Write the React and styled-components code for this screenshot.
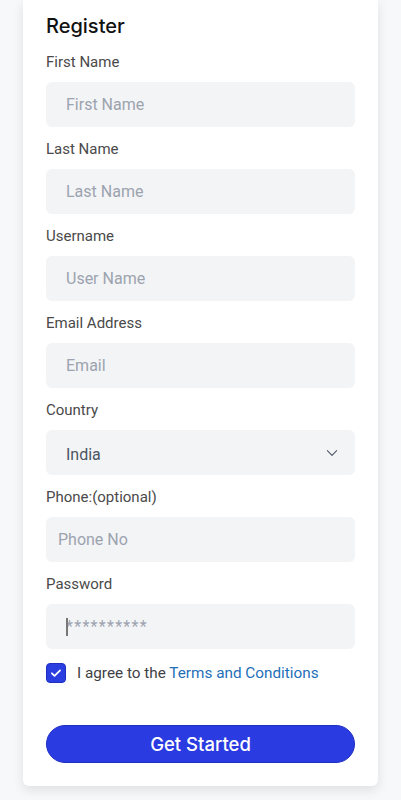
import React from "react";
import styled, { createGlobalStyle } from "styled-components";

const fields = [
  { label: "First Name", placeholder: "First Name" },
  { label: "Last Name", placeholder: "Last Name" },
  { label: "Username", placeholder: "User Name" },
  { label: "Email Address", placeholder: "Email" },
];

export default function App() {
  return (
    <>
      <GlobalStyle />
      <Page>
        <Card>
          <Title>Register</Title>
          {fields.map((f) => (
            <Field key={f.label}>
              <Label>{f.label}</Label>
              <Input placeholder={f.placeholder} />
            </Field>
          ))}
          <Field>
            <Label>Country</Label>
            <SelectBox>
              <span>India</span>
              <svg width="14" height="14" viewBox="0 0 24 24" fill="none" stroke="#4b5563" strokeWidth="1.8" strokeLinecap="round" strokeLinejoin="round">
                <path d="M4 8l8 8 8-8" />
              </svg>
            </SelectBox>
          </Field>
          <Field>
            <Label>Phone:(optional)</Label>
            <Input $inset={12} placeholder="Phone No" />
          </Field>
          <Field>
            <Label>Password</Label>
            <InputWrap>
              <Input $stars placeholder="**********" />
              <Caret />
            </InputWrap>
          </Field>
          <AgreeRow>
            <Check>
              <svg width="14" height="14" viewBox="0 0 24 24" fill="none" stroke="#fff" strokeWidth="3" strokeLinecap="round" strokeLinejoin="round">
                <path d="M5 12.5l4.5 4.5L19 7.5" />
              </svg>
            </Check>
            <AgreeText>
              I agree to the <Link href="#">Terms and Conditions</Link>
            </AgreeText>
          </AgreeRow>
          <Button>Get Started</Button>
        </Card>
      </Page>
    </>
  );
}

const GlobalStyle = createGlobalStyle`
  body {
    margin: 0;
    background: #f7f8fa;
    font-family: Inter, "Noto Sans", sans-serif;
  }
`;

const Page = styled.div`
  padding: 0 23px 15px;
`;

const Card = styled.div`
  background: #fff;
  padding: 14px 23px 23px;
  border-radius: 0 0 6px 6px;
  box-shadow: 0 4px 12px rgba(0, 0, 0, 0.1);
  display: flex;
  flex-direction: column;
`;

const Title = styled.h1`
  margin: 0 0 15px;
  font-size: 20px;
  line-height: 24px;
  font-weight: 500;
  color: #111;
`;

const Field = styled.div`
  display: flex;
  flex-direction: column;
  gap: 11px;
  margin-bottom: 13px;
`;

const Label = styled.label`
  font-family: Roboto, sans-serif;
  font-size: 15px;
  line-height: 18px;
  color: #4a4a4a;
`;

const InputWrap = styled.div`
  position: relative;
  display: flex;
  flex-direction: column;
`;

const Caret = styled.span`
  position: absolute;
  left: 20px;
  top: 14px;
  width: 1.5px;
  height: 18px;
  background: #777;
`;

const Input = styled.input`
  height: 45px;
  box-sizing: border-box;
  border: none;
  border-radius: 6px;
  background: #f3f4f6;
  padding: 0 ${(p) => p.$inset || 20}px;
  font-family: Roboto, sans-serif;
  font-size: 16px;
  letter-spacing: ${(p) => (p.$stars ? "1.3px" : "0")};
  color: #111;
  outline: none;
  &::placeholder {
    color: #9ca3af;
  }
`;

const SelectBox = styled.div`
  height: 45px;
  box-sizing: border-box;
  border-radius: 6px;
  background: #f3f4f6;
  padding: 0 16px 0 20px;
  display: flex;
  align-items: center;
  justify-content: space-between;
  font-family: Roboto, sans-serif;
  font-size: 16px;
  color: #4b5563;
  span {
    padding-top: 4px;
  }
`;

const AgreeRow = styled.div`
  display: flex;
  align-items: center;
  gap: 11px;
  margin-top: 1px;
`;

const Check = styled.span`
  width: 20px;
  height: 20px;
  box-sizing: border-box;
  border-radius: 4px;
  border: 1px solid #1f2fc0;
  background: #2b3fe0;
  display: flex;
  align-items: center;
  justify-content: center;
`;

const AgreeText = styled.span`
  font-family: Roboto, sans-serif;
  font-size: 15.3px;
  color: #3f3f46;
`;

const Link = styled.a`
  color: #1f6fb8;
  text-decoration: none;
`;

const Button = styled.button`
  margin-top: 42px;
  height: 38px;
  border: 1px solid #1f2fc0;
  border-radius: 19px;
  background: #2a3be2;
  color: #fff;
  font-family: Inter, sans-serif;
  font-size: 18.5px;
  font-weight: 500;
  cursor: pointer;
`;
